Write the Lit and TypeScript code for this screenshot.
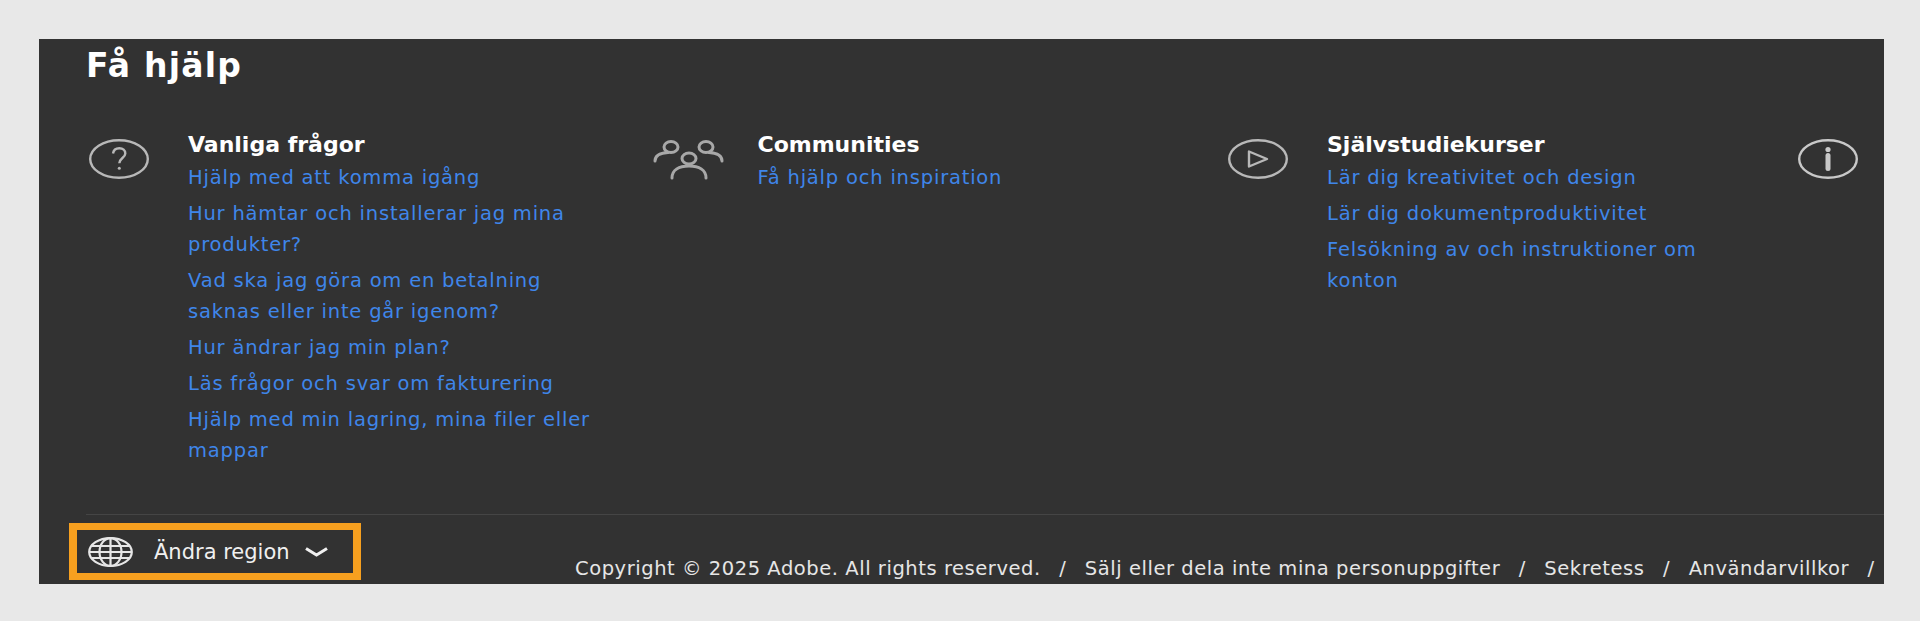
import { LitElement, html, css } from "lit";
import { customElement } from "lit/decorators.js";

const question = html`<svg width="60" height="40" viewBox="0 0 60 40" fill="none" stroke="#b8b8b8" stroke-width="2.400"><ellipse cx="30" cy="20" rx="28.800" ry="18.800"/><path d="M24 14.500c.5-3.200 3-5.300 6.300-5.300 3.600 0 6 2.100 6 5.200 0 4.500-6 4.800-6 9.900"/><circle cx="30.300" cy="29.300" r="1.500" fill="#b8b8b8" stroke="none"/></svg>`;
const people = html`<svg width="72" height="42" viewBox="0 1 72 42" fill="none" stroke="#a8a8a8" stroke-width="3" stroke-linecap="round"><ellipse cx="18" cy="9" rx="7" ry="5.500"/><ellipse cx="53" cy="9" rx="7" ry="5.500"/><ellipse cx="36" cy="20.500" rx="7" ry="5.500"/><path d="M2 23c0-5 5-8 13-8.500M69 23c0-5-5-8-13-8.500M19 40c0-8 7-12 17-12s17 4 17 12"/></svg>`;
const play = html`<svg width="60" height="40" viewBox="0 0 60 40" fill="none" stroke="#b8b8b8" stroke-width="2.400"><ellipse cx="30" cy="20" rx="28.800" ry="18.800"/><path d="M21 12.500v15l18-7.500z" stroke-linejoin="round"/></svg>`;
const info = html`<svg width="60" height="40" viewBox="0 0 60 40" fill="none" stroke="#c8c8c8" stroke-width="2.400"><ellipse cx="30" cy="20" rx="28.800" ry="18.800"/><path d="M30 16.500v13" stroke-width="5" stroke-linecap="round"/><circle cx="30" cy="10.500" r="2.600" fill="#c8c8c8" stroke="none"/></svg>`;
const globe = html`<svg width="45" height="30" viewBox="0 0 45 30" fill="none" stroke="#e6e6e6" stroke-width="2.200"><ellipse cx="22.500" cy="15" rx="21.300" ry="13.900"/><ellipse cx="22.500" cy="15" rx="11" ry="13.900"/><path d="M22.500 1v28M4 9h37M4 21h37M1 15h43"/></svg>`;
const chevron = html`<svg width="23" height="10" viewBox="0 0 23 10" fill="none" stroke="#f0f0f0" stroke-width="3"><path d="M1 1.500l10.500 6.500L22 1.500"/></svg>`;

const cols = [
  { icon: question, title: "Vanliga frågor", links: ["Hjälp med att komma igång", "Hur hämtar och installerar jag mina produkter?", "Vad ska jag göra om en betalning saknas eller inte går igenom?", "Hur ändrar jag min plan?", "Läs frågor och svar om fakturering", "Hjälp med min lagring, mina filer eller mappar"] },
  { icon: people, title: "Communities", links: ["Få hjälp och inspiration"] },
  { icon: play, title: "Självstudiekurser", links: ["Lär dig kreativitet och design", "Lär dig dokumentproduktivitet", "Felsökning av och instruktioner om konton"] },
  { icon: info, title: "", links: [] as string[] },
];
const legal = ["Copyright © 2025 Adobe. All rights reserved.", "Sälj eller dela inte mina personuppgifter", "Sekretess", "Användarvillkor"];

@customElement("app-root")
export class AppRoot extends LitElement {
  static styles = css`
    :host { display: block; height: 621px; box-sizing: border-box; background: #e8e8e8; padding: 39px 36px 0 39px; font-family: "DejaVu Sans", sans-serif; overflow: hidden; }
    .panel { background: #323232; height: 545px; box-sizing: border-box; padding: 7px 0 0 47px; overflow: hidden; color: #fff; }
    h1 { margin: 0; font-size: 33px; line-height: 40px; font-weight: 700; letter-spacing: 1.200px; color: #fff; }
    .cols { display: grid; grid-template-columns: repeat(4, 569.5px); margin-top: 47px; height: 381px; }
    .col { display: flex; gap: 36px; }
    .icon { width: 66px; flex: none; display: flex; justify-content: center; align-items: flex-start; padding-top: 6px; }
    .icon svg { flex: none; }
    .body { width: 410px; }
    h2 { margin: 0 0 5px; font-size: 22px; line-height: 24px; font-weight: 700; color: #fff; }
    a { display: block; font-size: 19.500px; line-height: 31px; letter-spacing: 0.8px; color: #3f86ea; margin-bottom: 5px; }
    hr { border: 0; height: 1px; background: #454545; margin: 0; }
    .foot { display: flex; align-items: flex-end; margin-top: 8px; }
    .region { flex: none; display: flex; align-items: center; box-sizing: border-box; width: 292px; height: 57px; margin-left: -17px; border: solid #f7a01f; border-width: 7px 8px; padding-left: 11px; font-size: 21px; color: #f0f0f0; white-space: nowrap; }
    .region span { margin: 0 15px 0 21px; }
    .copy { flex: none; margin: 0 0 -2px 214px; font-size: 19.500px; line-height: 26px; letter-spacing: 0.55px; color: #e6e6e6; white-space: nowrap; }
    .sep { margin: 0 18.500px; }
  `;
  render() {
    return html`<div class="panel">
      <h1>Få hjälp</h1>
      <div class="cols">
        ${cols.map((c) => html`<div class="col">
          <div class="icon">${c.icon}</div>
          <div class="body">
            ${c.title ? html`<h2>${c.title}</h2>` : ""}
            ${c.links.map((l) => html`<a>${l}</a>`)}
          </div>
        </div>`)}
      </div>
      <hr />
      <div class="foot">
        <div class="region">${globe}<span>Ändra region</span>${chevron}</div>
        <div class="copy">${legal.map((t) => html`${t}<span class="sep">/</span>`)}</div>
      </div>
    </div>`;
  }
}
